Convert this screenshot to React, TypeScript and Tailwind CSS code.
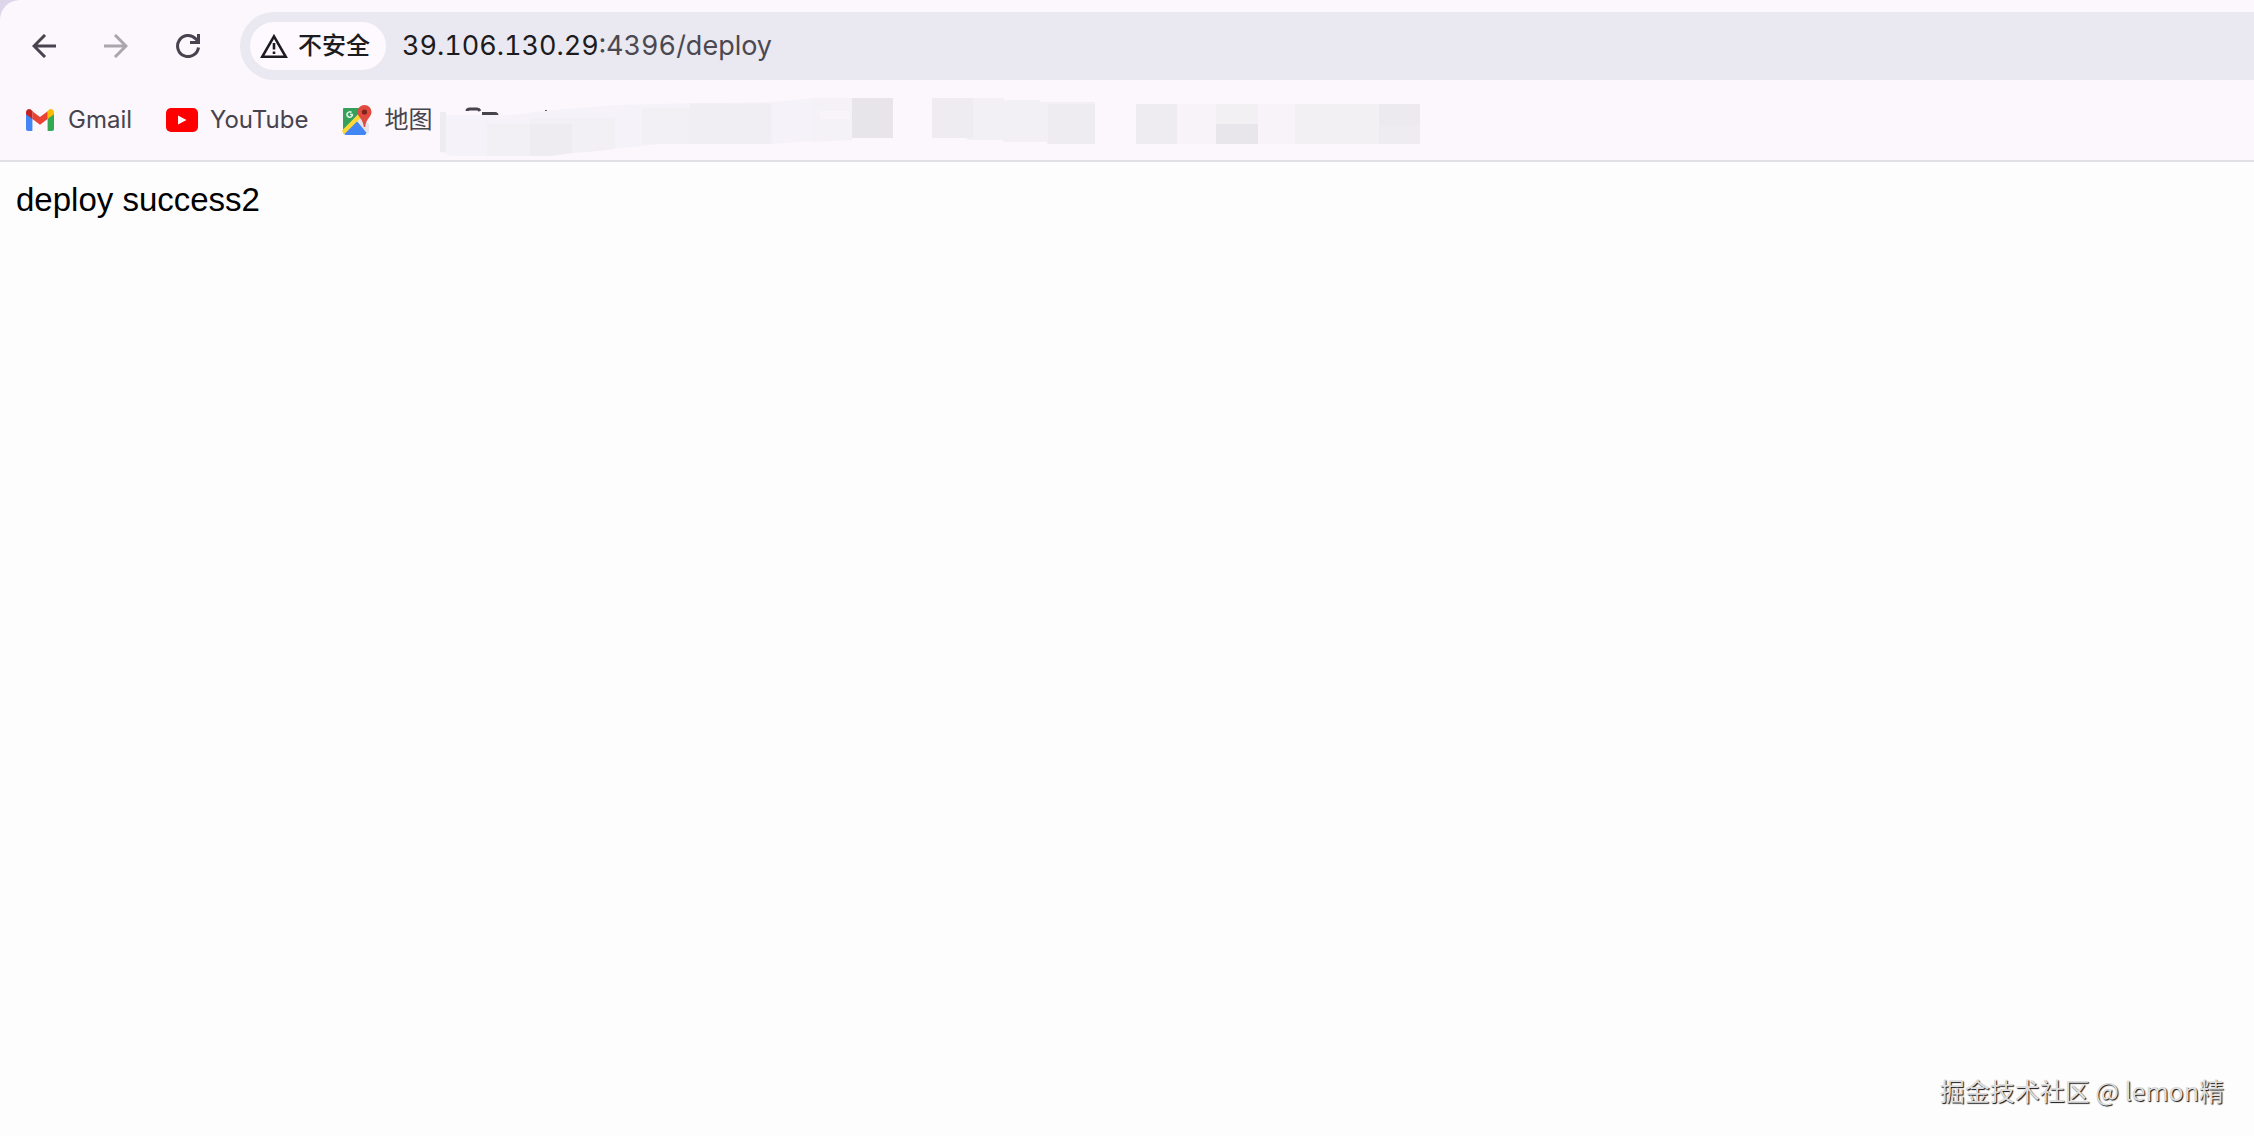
/**
 * Browser window: toolbar, bookmarks bar and a plain page
 */

import React, { ReactNode } from 'react';

const BackIcon = () => (
  <svg width="24" height="24" viewBox="0 0 24 24" fill="none" stroke="currentColor" strokeWidth="3">
    <path d="M24 12H2.5M13 1 2 12l11 11" />
  </svg>
);

const ForwardIcon = () => (
  <svg width="24" height="24" viewBox="0 0 24 24" fill="none" stroke="currentColor" strokeWidth="3">
    <path d="M0 12h21.5M11 1l11 11-11 11" />
  </svg>
);

const ReloadIcon = () => (
  <svg width="24" height="24" viewBox="0 0 24 24" fill="none" stroke="currentColor" strokeWidth="3">
    <path d="M22.5 13.5A10.5 10.5 0 1 1 19.5 4.6L22 7.5M22.5 0v8.5H14" />
  </svg>
);

const WarningIcon = () => (
  <svg width="28" height="24" viewBox="0 0 28 24" fill="none" stroke="currentColor" strokeWidth="2.6">
    <path d="M14 2.4 2.3 22.7h23.4z" />
    <path d="M14 9v6.5M14 17.5V20" />
  </svg>
);

const GmailIcon = () => (
  <svg width="30" height="22" viewBox="0 0 30 22">
    <path d="M0 4.5 6.4 9v13H2a2 2 0 0 1-2-2z" fill="#4285f4" />
    <path d="M28 4.5 21.6 9v13H26a2 2 0 0 0 2-2z" fill="#34a853" />
    <path d="M21.6 2.2V10L28 5.2V3.3c0-2.7-3-4.1-5.1-2.6z" fill="#fbbc04" />
    <path d="M6.4 10V2.2L14 8l7.6-5.8V10L14 15.8z" fill="#ea4335" />
    <path d="M0 3.3v1.9L6.4 10V2.2L5.1.7C3-.8 0 .6 0 3.3z" fill="#c5221f" />
  </svg>
);

const YouTubeIcon = () => (
  <svg width="32" height="24" viewBox="0 0 32 24">
    <rect width="32" height="24" rx="5" fill="#ff0000" />
    <path d="M12 7.5 20.5 12 12 16.5z" fill="#fff" />
  </svg>
);

const MapsIcon = () => (
  <svg width="30" height="30" viewBox="0 0 30 30">
    <path d="M2 3h20L1 26V4a1 1 0 0 1 1-1z" fill="#34a05a" />
    <path d="M14 15 25 27.5 23 30H3.5L1 28z" fill="#4285f4" />
    <path d="M14.5 15 18 11.5 27 19v8.5l-2 1z" fill="#e3e3e8" />
    <path d="M0 25.5 18 7.5l3 3L2.5 29 1 28z" fill="#fdd835" />
    <path d="M11 8.8H8v1.3h1.5a1.9 1.9 0 1 1-.5-2l1.1-1A3.500 3.500 0 1 0 11.1 9z" fill="#e3f1e7" />
    <path d="M22.5 0A7 7 0 0 0 15.5 7c0 5 5.5 6.5 6.3 15h1.4C24 13.5 29.5 12 29.5 7a7 7 0 0 0-7-7z" fill="#e04a3f" />
    <circle cx="22.5" cy="7" r="2.6" fill="#7b231e" />
  </svg>
);

// Bookmarks hidden behind mosaic strokes
const MaskedBookmarks = () => (
  <svg width="984" height="80" viewBox="0 0 984 80" className="shrink-0" aria-hidden="true">
    <path d="M27 31q0-2 3-2h7q2 0 3 2M42 33.5h13q2 0 2 2" fill="none" stroke="#47434c" strokeWidth="3" />
    <rect x="105" y="30" width="2" height="2" fill="#47434c" />
    <path d="M0 32h6v3h66l41-5 64-5 80-2 80-1 36-4h39v41l-39 2-43 3H220l-47 5-16 2-25 2-22 3H10L0 72z" fill="#f6f2f9" />
    <path d="M0 32h6v40H0z" fill="#eeebf1" />
    <path d="M47 44h43v-6h85v31l-18 2-25 2-22 3H47z" fill="#f2eff5" />
    <path d="M90 44h42v29l-22 3H90z" fill="#efecf1" />
    <path d="M202 28h48v-5h82v41H220l-18 1z" fill="#f3f0f5" />
    <path d="M250 24h80v40h-80z" fill="#f1eef3" />
    <path d="M372 18h40v42l-40 2z" fill="#f4f1f7" />
    <path d="M380 31h30v8h-30z" fill="#f8f4fa" />
    <path d="M412 18h41v40h-41z" fill="#e8e5ea" />
    <path d="M492 18h72v2h36v2h55v42h-48v-2h-44v-2h-36v-2h-35z" fill="#f3f0f5" />
    <path d="M492 18h41v40h-41zM608 24h47v40h-47z" fill="#efecf1" />
    <path d="M696 24h41v40h-41z" fill="#eeecf1" />
    <path d="M737 24h202v40H737z" fill="#f7f3f9" />
    <path d="M776 24h42v20h-42zM855 24h84v40h-84z" fill="#f3f0f4" />
    <path d="M776 44h42v20h-42z" fill="#e9e6eb" />
    <path d="M939 24h41v40h-41z" fill="#efecf1" />
    <path d="M939 24h41v22h-41z" fill="#edeaef" />
  </svg>
);

interface NavButtonProps {
  label: string;
  disabled?: boolean;
  children: ReactNode;
}

function NavButton({ label, disabled, children }: NavButtonProps) {
  return (
    <button
      type="button"
      aria-label={label}
      disabled={disabled}
      className="flex size-6 items-center justify-center text-[#47434f] disabled:text-[#aaa6ae]"
    >
      {children}
    </button>
  );
}

function Bookmark({ label, children }: { label: string; children: ReactNode }) {
  return (
    <a href="#" className="flex shrink-0 items-center gap-3 text-2xl text-[#47434c]">
      {children}
      <span>{label}</span>
    </a>
  );
}

function Toolbar() {
  return (
    <div className="flex items-center pt-3 pl-8">
      <nav className="flex shrink-0 gap-12 pr-10">
        <NavButton label="Back"><BackIcon /></NavButton>
        <NavButton label="Forward" disabled><ForwardIcon /></NavButton>
        <NavButton label="Reload"><ReloadIcon /></NavButton>
      </nav>
      <div className="flex h-17 grow items-center gap-4 rounded-l-full bg-[#eae8f0] pl-2.5">
        <button
          type="button"
          className="flex h-12 items-center gap-2.5 rounded-full bg-[#fdf9fe] pr-4 pl-2.5 text-2xl font-medium text-[#1c1b20]"
        >
          <WarningIcon />
          不安全
        </button>
        <div className="text-[27px] leading-9 text-[#1c1b20] tabular-nums">
          39.106.130.29<span className="text-[#4b4851]">:4396/deploy</span>
        </div>
      </div>
    </div>
  );
}

export default function App() {
  return (
    <div className="relative flex min-h-screen flex-col overflow-hidden bg-[#dcd6ea] font-['Inter','Noto_Sans_CJK_SC',sans-serif]">
      <header className="rounded-tl-[20px] border-b-2 border-[#e2e0e4] bg-[#fbf7fd]">
        <Toolbar />
        <div className="flex h-20 items-center pl-[26px]">
          <div className="flex shrink-0 items-center gap-[34px] pr-2">
            <Bookmark label="Gmail"><GmailIcon /></Bookmark>
            <Bookmark label="YouTube"><YouTubeIcon /></Bookmark>
            <Bookmark label="地图"><MapsIcon /></Bookmark>
          </div>
          <MaskedBookmarks />
        </div>
      </header>

      <main className="grow bg-[#fdfdfd] px-4 py-3.5 font-['Liberation_Sans',Arial,sans-serif] text-[33px] leading-12 text-black">
        <p>deploy success2</p>
      </main>

      {/* Watermark */}
      <div className="absolute right-[30px] bottom-6.5 font-['Noto_Sans_CJK_SC',sans-serif] text-[25px] leading-10 text-[#dedede] [text-shadow:1px_1px_1px_#111]">
        掘金技术社区 @ lemon精
      </div>
    </div>
  );
}
